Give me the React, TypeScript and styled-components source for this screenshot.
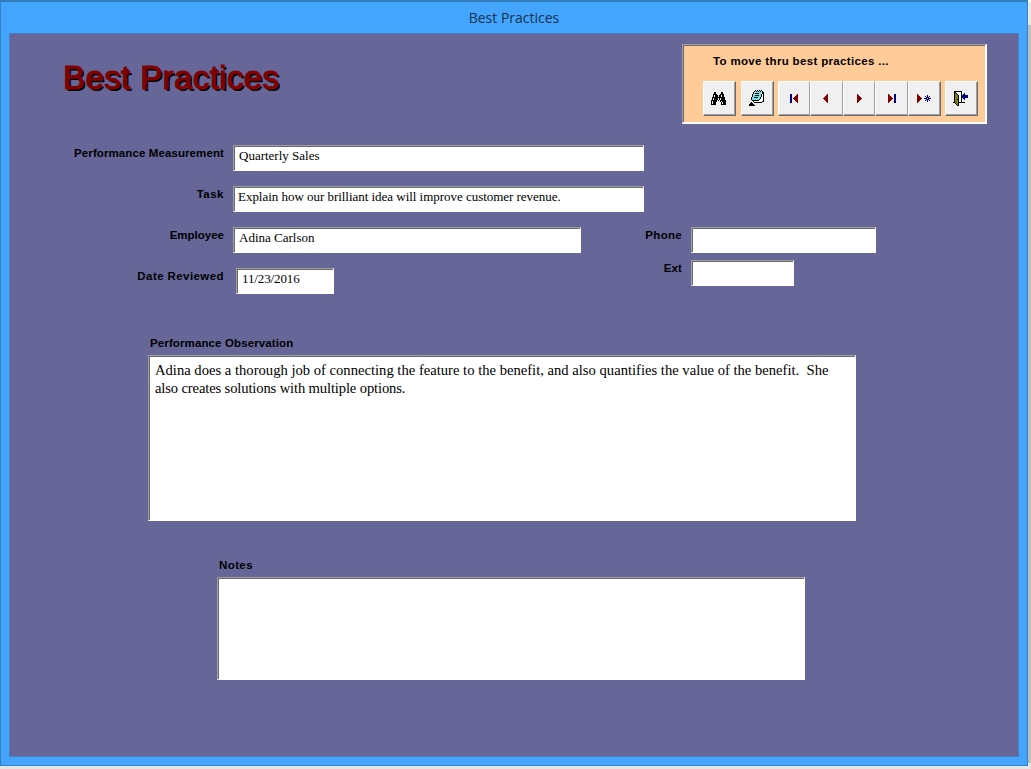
import React from 'react';
import styled, { createGlobalStyle, css } from 'styled-components';

const GlobalStyle = createGlobalStyle`
  * { box-sizing: border-box; }
  html, body { margin: 0; height: 769px; overflow: hidden; }
  body {
    background: linear-gradient(#fff 0 2px, #e9e9e9 2px 25px, #bfbfbf 25px 763px, #e6e6e6 763px);
  }
`;

const Window = styled.div`
  width: 1028px;
  height: 766px;
  display: flex;
  flex-direction: column;
  background: #43a5fd;
  border: 1px solid #3383c4;
  border-top: 2px solid #307ebc;
  padding: 0 8px 8px;
`;

const TitleBar = styled.header`
  height: 31px;
  flex: none;
  text-align: center;
  font: 14px/32px 'Open Sans', 'Noto Sans', sans-serif;
  letter-spacing: 0;
  color: #17324d;
`;

const FormArea = styled.main`
  flex: 1;
  background: #666699;
  border: 1px solid #4f7cbc;
  display: flex;
  flex-direction: column;
`;

const Header = styled.div`
  display: flex;
  justify-content: space-between;
  align-items: flex-start;
  padding: 10px 31px 0 53px;
  height: 111px;
`;

const Heading = styled.h1`
  margin: 15px 0 0;
  font: 33px/38px 'Liberation Sans', Arial, sans-serif;
  letter-spacing: 0.4px;
  color: #800000;
  -webkit-text-stroke: 1.1px #800000;
  text-shadow: 2px 2px 0 #000;
`;

const sunken = css`
  border: 1px solid;
  border-color: #a0a0a0 #fff #fff #a0a0a0;
  box-shadow: inset 1px 1px 0 #696969;
`;

const NavPanel = styled.section`
  ${sunken}
  width: 305px;
  height: 80px;
  border-width: 1px 2px 2px 1px;
  background: #ffcc99;
  padding: 8px 6px 0 20px;
`;

const labelFont = css`
  font: bold 11.5px/16px 'Liberation Sans', Arial, sans-serif;
  color: #000;
  white-space: nowrap;
`;

const NavCaption = styled.div<{ $track: number }>`
  ${labelFont}
  letter-spacing: ${p => p.$track}px;
  padding-left: 10px;
`;

const NavButtons = styled.div`
  display: flex;
  margin-top: 12px;
`;

const NavButton = styled.button<{ $w?: number; $gap?: number; $last?: boolean }>`
  width: ${p => p.$w ?? 33}px;
  height: 35px;
  flex: none;
  margin: 0 0 0 ${p => p.$gap ?? 0}px;
  padding: 0;
  background: #f0f0f0;
  border: 1px solid;
  border-color: #fff #696969 #696969 #fff;
  box-shadow: inset -1px -1px 0 #a0a0a0;
  display: flex;
  align-items: center;
  justify-content: center;
  ${p => p.$last === false && css`border-right-color: #a0a0a0; box-shadow: inset 0 -1px 0 #a0a0a0;`}
`;

const Details = styled.div`
  display: flex;
  height: 150px;
`;

const Column = styled.div<{ $w: number; $gap: number; $top?: number }>`
  width: ${p => p.$w}px;
  display: flex;
  flex-direction: column;
  gap: ${p => p.$gap}px;
  padding-top: ${p => p.$top ?? 0}px;
`;

const Row = styled.label`
  display: flex;
  height: 26px;
`;

const Label = styled.span<{ $w: number; $track: number }>`
  ${labelFont}
  width: ${p => p.$w}px;
  flex: none;
  text-align: right;
  letter-spacing: ${p => p.$track}px;
`;

const Field = styled.div<{ $w: number; $gap?: number; $track?: number; $pad?: number }>`
  ${sunken}
  width: ${p => p.$w}px;
  height: 26px;
  flex: none;
  margin-left: ${p => p.$gap ?? 9}px;
  padding: 2px 4px 2px ${p => p.$pad ?? 5}px;
  background: #fff;
  font: 13px/16px 'Liberation Serif', 'Times New Roman', serif;
  letter-spacing: ${p => p.$track ?? 0}px;
  color: #000;
  white-space: nowrap;
`;

const Block = styled.section<{ $left: number; $top: number }>`
  margin: ${p => p.$top}px 0 0 ${p => p.$left}px;
`;

const BlockLabel = styled.div<{ $track: number }>`
  ${labelFont}
  letter-spacing: ${p => p.$track}px;
  padding: 1px 0 0 2px;
  height: 21px;
`;

const Memo = styled.div<{ $w: number; $h: number }>`
  ${sunken}
  width: ${p => p.$w}px;
  height: ${p => p.$h}px;
  background: #fff;
  padding: 5px 6px;
  font: 14.6px/18px 'Liberation Serif', 'Times New Roman', serif;
  white-space: pre;
  color: #000;
`;

const MemoLine = styled.div<{ $track: number }>`
  letter-spacing: ${p => p.$track}px;
`;

const palette: Record<string, string> = {
  '#': '#000000', r: '#800000', b: '#000080', o: '#808000', c: '#6fdfe8', w: '#ffffff', g: '#808080',
};

/* Bitmap icons: one character for each pixel, '.' is transparent. */
const icons = {
  find: [
    '...##.....##...',
    '...##.....##...',
    '..####...####..',
    '..#.###.##.##..',
    '..#.###.##.##..',
    '.#############.',
    '.#.####.#.####.',
    '.#.####.#.####.',
    '######.#.######',
    '#.####...#.####',
    '#.###.....#.###',
    '#.###.....#.###',
    '#####.....#####',
  ],
  notes: [
    '......#.#.#.#..',
    '.....#c#c#c#c#.',
    '....#cccccccc##',
    '....#c####ccw##',
    '...#cccccccc#w#',
    '...#cc####cc#w#',
    '...#cccccccc#w#',
    '..#cc####cc#ww#',
    '..#cccccccc#ww#',
    '..#ccccccc#www#',
    '...#######wwww#',
    '....#wwwwwwww##',
    '..#..########..',
    '.###...........',
    '#####..........',
    '######.........',
  ],
  first: ['bb.....r', 'bb....rr', 'bb...rrr', 'bb..rrrr', 'bb.rrrrr', 'bb..rrrr', 'bb...rrr', 'bb....rr', 'bb.....r'],
  prev: ['....r', '...rr', '..rrr', '.rrrr', 'rrrrr', '.rrrr', '..rrr', '...rr', '....r'],
  next: ['r....', 'rr...', 'rrr..', 'rrrr.', 'rrrrr', 'rrrr.', 'rrr..', 'rr...', 'r....'],
  last: ['r.....bb', 'rr....bb', 'rrr...bb', 'rrrr..bb', 'rrrrr.bb', 'rrrr..bb', 'rrr...bb', 'rr....bb', 'r.....bb'],
  add: [
    'r.............',
    'rr........b...',
    'rrr.....b.b.b.',
    'rrrr.....bbb..',
    'rrrrr..bbb.bbb',
    'rrrr.....bbb..',
    'rrr.....b.b.b.',
    'rr........b...',
    'r.............',
  ],
  exit: [
    '.########......',
    '.##wwwww#......',
    '.#o#wwww#..b...',
    '.#oo#www#.bb...',
    '.#ooo#ww#bbbbbb',
    '.#ooo#ww#bbbbbb',
    '.#ooo#ww#bbbbbb',
    '.#ooo#ww#.bb...',
    '.#oo##ww#..b...',
    '.#ooo#ww#......',
    '.#ooo#ww#......',
    '##ooo#######...',
    '..#oo#.........',
    '...#o#.........',
    '....##.........',
  ],
};

const IconSvg = styled.svg<{ $x: number; $y: number }>`
  display: block;
  flex: none;
  transform: translate(${p => p.$x}px, ${p => p.$y}px);
`;

function BitmapIcon({ name, x = 0, y = 0 }: { name: keyof typeof icons; x?: number; y?: number }) {
  const rows = icons[name];
  const raw = Math.max(...rows.map(r => r.length));
  const w = raw % 2 ? raw : raw + 1;
  const h = rows.length % 2 ? rows.length : rows.length + 1;
  return (
    <IconSvg $x={x} $y={y} width={w} height={h} shapeRendering="crispEdges" aria-hidden>
      {rows.flatMap((row, j) =>
        [...row].map((ch, i) =>
          ch === '.' ? null : <rect key={`${i}-${j}`} x={i} y={j} width={1} height={1} fill={palette[ch]} />,
        ),
      )}
    </IconSvg>
  );
}

export default function App() {
  return (
    <>
      <GlobalStyle />
      <Window>
        <TitleBar>Best Practices</TitleBar>
        <FormArea>
          <Header>
            <Heading>Best Practices</Heading>
            <NavPanel>
              <NavCaption $track={0.34}>To move thru best practices ...</NavCaption>
              <NavButtons>
                <NavButton aria-label="Find"><BitmapIcon name="find" x={-1} /></NavButton>
                <NavButton aria-label="Notes" $gap={5}><BitmapIcon name="notes" x={-1} /></NavButton>
                <NavButton aria-label="First" $gap={4} $w={32} $last={false}><BitmapIcon name="first" /></NavButton>
                <NavButton aria-label="Previous" $last={false}><BitmapIcon name="prev" x={-1} /></NavButton>
                <NavButton aria-label="Next" $w={32} $last={false}><BitmapIcon name="next" /></NavButton>
                <NavButton aria-label="Last" $last={false}><BitmapIcon name="last" x={1} /></NavButton>
                <NavButton aria-label="New"><BitmapIcon name="add" /></NavButton>
                <NavButton aria-label="Close" $gap={4}><BitmapIcon name="exit" x={-1} /></NavButton>
              </NavButtons>
            </NavPanel>
          </Header>
          <Details>
            <Column $w={575} $gap={15}>
              <Row>
                <Label $w={214} $track={0.1}>Performance Measurement</Label>
                <Field $w={411}>Quarterly Sales</Field>
              </Row>
              <Row>
                <Label $w={214} $track={0.5}>Task</Label>
                <Field $w={411} $track={-0.03} $pad={4}>Explain how our brilliant idea will improve customer revenue.</Field>
              </Row>
              <Row>
                <Label $w={214} $track={0}>Employee</Label>
                <Field $w={348}>Adina Carlson</Field>
              </Row>
              <Row>
                <Label $w={214} $track={0.42}>Date Reviewed</Label>
                <Field $w={98} $gap={12} $track={-0.12}>11/23/2016</Field>
              </Row>
            </Column>
            <Column $w={300} $gap={7} $top={82}>
              <Row>
                <Label $w={97} $track={0.3}>Phone</Label>
                <Field $w={185} />
              </Row>
              <Row>
                <Label $w={97} $track={0.1}>Ext</Label>
                <Field $w={103} />
              </Row>
            </Column>
          </Details>
          <Block $left={138} $top={39}>
            <BlockLabel $track={0.12}>Performance Observation</BlockLabel>
            <Memo $w={708} $h={166}>
              <MemoLine $track={0.01}>
                {'Adina does a thorough job of connecting the feature to the benefit, and also quantifies the value of the benefit.  She'}
              </MemoLine>
              <MemoLine $track={-0.13}>also creates solutions with multiple options.</MemoLine>
            </Memo>
          </Block>
          <Block $left={207} $top={35}>
            <BlockLabel $track={0.4}>Notes</BlockLabel>
            <Memo $w={588} $h={103} />
          </Block>
        </FormArea>
      </Window>
    </>
  );
}
